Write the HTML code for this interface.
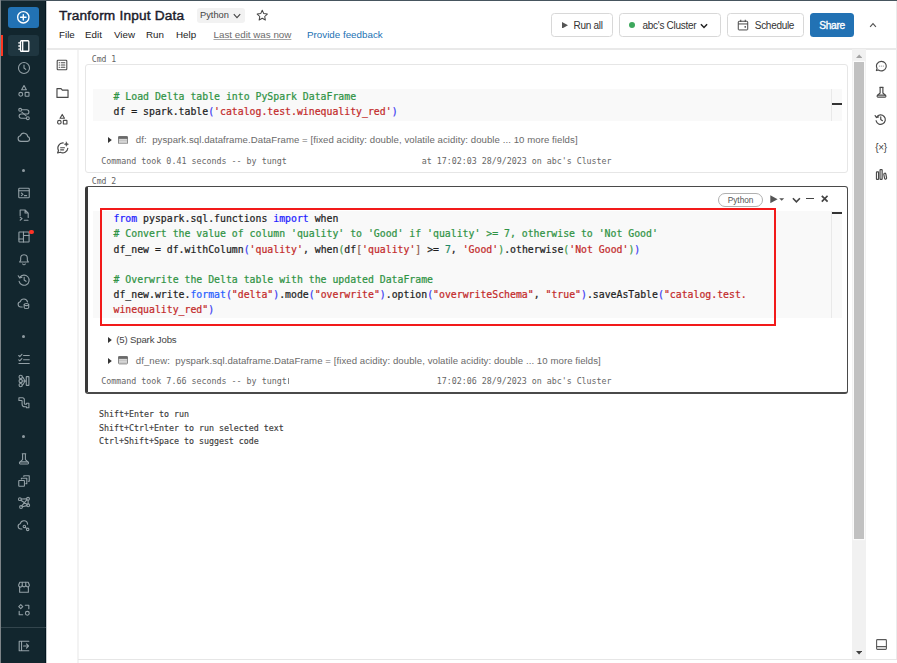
<!DOCTYPE html>
<html lang="en">
<head>
<meta charset="utf-8">
<title>Tranform Input Data - Databricks</title>
<style>
*{box-sizing:border-box;margin:0;padding:0}
html,body{width:897px;height:663px;overflow:hidden;background:#fff}
body{position:relative;font-family:"Liberation Sans",Arial,sans-serif;color:#222;font-size:11px}
.abs{position:absolute}
.mono{font-family:"DejaVu Sans Mono","Liberation Mono",monospace}
/* frame */
#topline{left:0;top:0;width:897px;height:1px;background:#46555e}
#leftline{left:0;top:0;width:1px;height:663px;background:#7d8488}
#rightline{left:896px;top:1px;width:1px;height:659px;background:#ebebeb}
#bottomline{left:78px;top:659px;width:819px;height:1px;background:#e6e6e6}
/* left nav */
#nav{left:1px;top:1px;width:45px;height:662px;background:#12262e;border-right:1px solid #04161f}
#navedge{left:46px;top:1px;width:1px;height:662px;background:#c3c9cc}
#newbtn{left:8px;top:7px;width:31px;height:21px;background:#2272b4;border-radius:3px}
#selitem{left:8px;top:35px;width:31px;height:21px;background:#1f3640;border-radius:3px}
#selbar{left:1px;top:35px;width:2px;height:21px;background:#ff3621}
.nico{position:absolute;left:16px;width:16px;height:16px;color:#93a0a6}
.nico svg{display:block;width:100%;height:100%;fill:none;stroke:currentColor;stroke-width:1.25;stroke-linecap:round;stroke-linejoin:round}
.ndot{position:absolute;left:22.200px;width:3px;height:3px;border-radius:50%;background:#8e9aa0}
#navdiv{left:1px;top:627px;width:45px;height:1px;background:#33454d}
/* header */
#title{left:59px;top:7.300px;font-size:13.700px;font-weight:normal;-webkit-text-stroke:0.450px #1c1c2b;letter-spacing:0.180px;color:#1c1c2b;white-space:nowrap;line-height:18px}
#langsel{left:197px;top:8.200px;width:47.5px;height:15px;background:#f2f2f2;border-radius:3px;font-size:9.3px;color:#444;line-height:15px;padding-left:3px;white-space:nowrap}
  .menu{position:absolute;top:27.600px;font-size:9.8px;line-height:13px;color:#222;white-space:nowrap}
#hdrline{left:47px;top:48px;width:850px;height:2px;background:#e9e9e9}
.hbtn{position:absolute;top:13px;height:24px;border:1px solid #d8d8d8;border-radius:3.5px;background:#fff;font-size:10px;letter-spacing:-0.300px;line-height:23px;color:#333;white-space:nowrap}
.hico{position:absolute}
.hico svg{display:block;width:100%;height:100%}
#share{left:810px;top:13px;width:44px;height:24px;background:#2272b4;border-radius:3.5px;color:#fff;font-size:10.200px;letter-spacing:-0.300px;line-height:25px;text-align:center;-webkit-text-stroke:0.350px #fff}
/* side panel */
#sideline{left:77px;top:50px;width:2px;height:613px;background:#f3f3f3}
.sico{position:absolute;left:55px;width:14px;height:14px;color:#4a4a4a}
.sico svg,.rico svg{display:block;width:100%;height:100%;fill:none;stroke:currentColor;stroke-width:1.45;stroke-linecap:round;stroke-linejoin:round}
.rico{position:absolute;left:874px;width:14px;height:14px;color:#4a4a4a}
/* scrollbar */
#track{left:852px;top:49px;width:14px;height:610px;background:#f1f1f1}
#thumb{left:853.600px;top:62px;width:10px;height:476.500px;background:#c1c1c1;box-shadow:0 0 0 1.200px #fbfbfb}
/* cells */
.cmdlbl{position:absolute;left:91.800px;font-size:8.150px;line-height:10px;color:#636363;white-space:nowrap}
#cell1{left:85px;top:63.500px;width:763px;height:109.500px;border:1px solid #e6e6e6;border-radius:3px;background:#fff}
#cell2{left:85px;top:186px;width:763px;height:208px;border:1px solid #4a4a4a;border-left:3px solid #3a3a3a;border-bottom:2px solid #4a4a4a;border-radius:3px;background:#fff}
.codebg{position:absolute;left:93px;width:749px;background:#f9f9f9}
.code{position:absolute;left:113.5px;font-size:9.830px;line-height:15.070px;white-space:pre;color:#1e1e1e;-webkit-text-stroke:0.220px currentColor}
.c{color:#2f9344}.s{color:#c32a2a}.k{color:#1c1cff}.p{color:#3c3cf2}.p2{color:#3f9a4a}.p3{color:#8a5a4a}.n{color:#1f8a66}.f{color:#2860ff}
.vline{position:absolute;left:831px;width:1px;background:#e9e9e9}
.vbar{position:absolute;left:832px;width:10px;height:2px;background:#333}
.res{position:absolute;font-size:9.600px;line-height:12px;color:#6a6a6a;white-space:nowrap;letter-spacing:0.070px}
.tri{position:absolute;width:3.800px;height:6px}
.tri svg{display:block;width:100%;height:100%}
.tbl{position:absolute;width:10px;height:8.400px}
.took{position:absolute;left:101.200px;font-size:8.340px;line-height:10px;color:#666;white-space:pre}
.tookr{left:auto;right:285.400px;font-size:8.300px}
#redbox{left:100px;top:208px;width:675.500px;height:118px;border:2px solid #f21a1a}
#pill{left:717.700px;top:193.300px;width:45.800px;height:13.600px;border:1px solid #b0b0b0;border-radius:7px;font-size:8.300px;line-height:12.800px;text-align:center;color:#555;background:#fff}
.hint{position:absolute;left:99px;font-size:8.300px;line-height:10px;color:#3c3c3c;-webkit-text-stroke:0.150px #3c3c3c;white-space:pre}
</style>
</head>
<body>
<!-- left nav -->
<div class="abs" id="nav"></div>
<div class="abs" id="navedge"></div>
<div class="abs" id="newbtn"></div>
<div class="abs" id="selitem"></div>
<div class="abs" id="selbar"></div>
<div class="abs" id="navdiv"></div>
<div class="nico" style="left:16.4px;top:9.7px;width:14.6px;height:14.6px;color:#ffffff;"><svg viewBox="0 0 16 16" style="stroke-width:1.5"><circle cx="8" cy="8" r="6.2"/><path d="M8 5v6M5 8h6"/></svg></div>
<div class="nico" style="left:16.7px;top:38.5px;width:14px;height:14px;color:#ffffff;"><svg viewBox="0 0 16 16" style="stroke-width:1.5"><rect x="4" y="2" width="9.5" height="12" rx="1" /><path d="M6.5 2v12M2 4.5h2M2 8h2M2 11.5h2"/></svg></div>
<div class="nico" style="left:16.7px;top:61.0px;width:14px;height:14px;"><svg viewBox="0 0 16 16" ><circle cx="8" cy="8" r="6.3"/><path d="M8 4.5V8l2 1.6"/></svg></div>
<div class="nico" style="left:16.7px;top:83.6px;width:14px;height:14px;"><svg viewBox="0 0 16 16" ><path d="M8 1.8l2.7 4.7H5.3z"/><circle cx="4.3" cy="11.8" r="2.2"/><rect x="9.3" y="9.6" width="4.4" height="4.4" rx=".5"/></svg></div>
<div class="nico" style="left:16.7px;top:106.7px;width:14px;height:14px;"><svg viewBox="0 0 16 16" ><circle cx="3.6" cy="3.2" r="1.6"/><circle cx="12.4" cy="12.8" r="1.6"/><path d="M5.2 3.2h6a2.4 2.4 0 0 1 0 4.8h-6.4a2.4 2.4 0 0 0 0 4.8h6"/><path d="M5.5 5.8l5 4.4" /></svg></div>
<div class="nico" style="left:16.7px;top:130.0px;width:14px;height:14px;"><svg viewBox="0 0 16 16" ><path d="M4.5 13a3.2 3.2 0 0 1-.6-6.35A4.3 4.3 0 0 1 12.3 7.6 2.75 2.75 0 0 1 12 13z"/></svg></div>
<div class="nico" style="left:16.7px;top:185.5px;width:14px;height:14px;"><svg viewBox="0 0 16 16" ><rect x="2" y="2.5" width="12" height="11" rx="1"/><path d="M2 5.5h12M5 8l1.8 1.5L5 11M8.5 11H11"/></svg></div>
<div class="nico" style="left:16.7px;top:208.2px;width:14px;height:14px;"><svg viewBox="0 0 16 16" ><path d="M3.6 8.6V2.2h5.6L12.8 5.8v5M9.2 2.2V5.800H12.8"/><path d="M3.600 10.400l2.200 1.800-2.200 1.800M8.300 14H12.600"/></svg></div>
<div class="nico" style="left:16.7px;top:229.6px;width:14px;height:14px;"><svg viewBox="0 0 16 16" ><rect x="2.2" y="2.2" width="11.6" height="11.6" rx=".6"/><path d="M7.400 2.200v11.600M2.200 10.200H7.400M7.400 6.200h6.400"/></svg></div>
<div class="nico" style="left:16.7px;top:252.0px;width:14px;height:14px;"><svg viewBox="0 0 16 16" ><path d="M3 11.5h10l-1.2-2V7a3.8 3.8 0 0 0-7.6 0v2.5z"/><path d="M6.5 13.6a1.6 1.6 0 0 0 3 0"/></svg></div>
<div class="nico" style="left:16.7px;top:273.3px;width:14px;height:14px;"><svg viewBox="0 0 16 16" ><path d="M3.2 5A5.8 5.8 0 1 1 2.4 9.5"/><path d="M1.4 3.2L3 5.6l2.6-.9"/><path d="M8.2 4.8V8l2.1 1.5"/></svg></div>
<div class="nico" style="left:16.7px;top:296.4px;width:14px;height:14px;"><svg viewBox="0 0 16 16" ><path d="M6 12.5H4.3a3 3 0 0 1-.5-5.96A4.2 4.2 0 0 1 12 6.8"/><ellipse cx="10.8" cy="9.8" rx="2.6" ry="1.2"/><path d="M8.2 9.8v3.2c0 .66 1.16 1.2 2.6 1.2s2.6-.54 2.6-1.2V9.8"/></svg></div>
<div class="nico" style="left:16.7px;top:352.2px;width:14px;height:14px;"><svg viewBox="0 0 16 16" ><path d="M2 4l1.2 1.2L5.6 2.6M2 9l1.2 1.2L5.6 7.6M7.5 4H14M7.5 8.8H14M2.2 13.2H14"/></svg></div>
<div class="nico" style="left:16.7px;top:373.7px;width:14px;height:14px;"><svg viewBox="0 0 16 16" ><circle cx="4.200" cy="3.300" r="1.900"/><circle cx="4.200" cy="8" r="1.900"/><circle cx="4.200" cy="12.700" r="1.900"/><path d="M6.100 3.600c2.200.200 1.600 4.400 3.900 4.400M6.100 12.400c2.200-.200 1.600-4.400 3.900-4.400M6.100 8h4"/><rect x="10.600" y="3" width="3" height="10" rx=".4"/></svg></div>
<div class="nico" style="left:16.7px;top:395.4px;width:14px;height:14px;"><svg viewBox="0 0 16 16" ><path d="M2.2 3.2h4.2a2 2 0 0 1 2 2v4.5a.8.8 0 0 0 .8.8h1.6v-1h2.8v5h-2.8v-1H9a3.2 3.2 0 0 1-3.2-3.2V6.8a.6.6 0 0 0-.6-.6H2.2z"/></svg></div>
<div class="nico" style="left:16.7px;top:451.8px;width:14px;height:14px;"><svg viewBox="0 0 16 16" ><path d="M6 2h4M6.4 2v6.6L3.2 11.6a1.2 1.2 0 0 0 .9 2.1h7.8a1.2 1.2 0 0 0 .9-2.1L9.6 8.6V2"/><path d="M3.6 11.3h8.8"/></svg></div>
<div class="nico" style="left:16.7px;top:473.8px;width:14px;height:14px;"><svg viewBox="0 0 16 16" ><rect x="2" y="7.5" width="6.5" height="6.5" rx=".5"/><path d="M5 5.8v-1h6.2v6.2h-1M7.8 2.8V2H14v6.2h-1"/></svg></div>
<div class="nico" style="left:16.7px;top:495.8px;width:14px;height:14px;"><svg viewBox="0 0 16 16" ><circle cx="3.3" cy="3.6" r="1.6"/><circle cx="12.6" cy="3.2" r="1.6"/><circle cx="12.8" cy="10.6" r="1.6"/><circle cx="4.6" cy="12.6" r="1.6"/><path d="M4.9 3.5l6.1-.2M4.4 4.9l7.2 4.8M12.7 4.8v4.2M11.3 11l-5.2 1.3M11.4 4.2L5.4 11.3"/></svg></div>
<div class="nico" style="left:16.7px;top:517.9px;width:14px;height:14px;"><svg viewBox="0 0 16 16" ><path d="M5.6 12.5H4.3a3 3 0 0 1-.5-5.96A4.2 4.2 0 0 1 12.1 7"/><circle cx="8.4" cy="9.6" r="1.4"/><circle cx="12.2" cy="13" r="1.4"/><path d="M9.4 10.6l1.8 1.5"/></svg></div>
<div class="nico" style="left:16.7px;top:580.4px;width:14px;height:14px;"><svg viewBox="0 0 16 16" ><path d="M3 7.5V14h10V7.5"/><path d="M3.2 2.5h9.6L14.2 6a2.06 2.06 0 0 1-4.1 0 2.06 2.06 0 0 1-4.1 0A2.06 2.06 0 0 1 1.8 6z"/><path d="M6 2.5V6M10 2.5V6" /></svg></div>
<div class="nico" style="left:16.7px;top:603.0px;width:14px;height:14px;"><svg viewBox="0 0 16 16" ><path d="M4.3 1.8l2.3 2.3-2.3 2.3L2 4.100z"/><circle cx="11.8" cy="11.8" r="2.2"/><path d="M9.5 2.5h4v4M6.500 13.5h-4v-4"/></svg></div>
<div class="nico" style="left:16.7px;top:638.7px;width:14px;height:14px;"><svg viewBox="0 0 16 16" ><path d="M13.500 2.500H2.500v11h11M5.200 2.500v11M7.500 8h5.500M10.800 5.600L13.200 8l-2.400 2.400"/></svg></div>
<div class="ndot" style="top:168.9px"></div>
<div class="ndot" style="top:335.3px"></div>
<div class="ndot" style="top:435.3px"></div>
<div class="abs" style="left:29.400px;top:229.600px;width:4.2px;height:4.2px;border-radius:50%;background:#ff3326"></div>

<!-- header -->
<div class="abs" id="title">Tranform Input Data</div>
<div class="abs" id="langsel">Python</div>
<div class="hico" style="left:233px;top:12.200px;width:8px;height:8px"><svg viewBox="0 0 8 8"><path d="M0.800 2.200L4 5.600 7.200 2.200" fill="none" stroke="#444" stroke-width="1.100"/></svg></div>
<div class="hico" style="left:256.200px;top:9px;width:12.500px;height:12.500px"><svg viewBox="0 0 16 16"><path d="M8 1.700l1.950 4.200 4.550.550-3.350 3.150.850 4.550L8 11.900l-4 2.250.850-4.550L1.500 6.450l4.550-.550z" fill="none" stroke="#444" stroke-width="1.300" stroke-linejoin="round"/></svg></div>
<div class="menu" style="left:59px">File</div>
<div class="menu" style="left:85px">Edit</div>
<div class="menu" style="left:114px">View</div>
<div class="menu" style="left:146px">Run</div>
<div class="menu" style="left:176px">Help</div>
<div class="menu" style="left:213.500px;color:#6b6b6b;text-decoration:underline;text-decoration-color:#a5a5a5">Last edit was now</div>
<div class="menu" style="left:307px;color:#2272b4">Provide feedback</div>
<div class="hbtn" style="left:551px;width:62px;padding-left:21.600px">Run all</div>
<div class="hico" style="left:562px;top:21.800px;width:6px;height:6.600px"><svg viewBox="0 0 6 6.600"><path d="M0 0L6 3.300 0 6.600z" fill="#555"/></svg></div>
<div class="hbtn" style="left:619px;width:101.500px;padding-left:22.600px">abc's Cluster</div>
<div class="abs" style="left:628.800px;top:21.700px;width:6.600px;height:6.600px;border-radius:50%;background:#3ea85d"></div>
<div class="hico" style="left:700.400px;top:21.500px;width:8px;height:8px"><svg viewBox="0 0 8 8"><path d="M0.900 2.200L4 5.400 7.100 2.200" fill="none" stroke="#222" stroke-width="1.500"/></svg></div>
<div class="hbtn" style="left:727px;width:77px;padding-left:26.800px">Schedule</div>
<div class="hico" style="left:736.600px;top:18.800px;width:12px;height:12px"><svg viewBox="0 0 16 16" fill="none" stroke="#444" stroke-width="1.300" stroke-linejoin="round"><rect x="1.700" y="3" width="12.600" height="11.600" rx="1"/><path d="M1.700 6.600h12.600M5 1v3M11 1v3"/><path d="M10 10.500h2M11 9.500v2" stroke-width="1.200"/></svg></div>
<div class="abs" id="share">Share</div>
<div class="hico" style="left:868.700px;top:21.400px;width:8px;height:8px"><svg viewBox="0 0 8 8"><path d="M1.100 5.800L4 2.700 6.900 5.800" fill="none" stroke="#555" stroke-width="1.200"/></svg></div>
<div class="abs" id="hdrline"></div>

<!-- side panel -->
<div class="abs" id="sideline"></div>

<!-- side panel icons -->
<div class="sico" style="left:56.400px;top:59.300px;width:12px;height:12px"><svg viewBox="0 0 16 16"><rect x="1.600" y="1.600" width="12.800" height="12.800" rx="1"/><path d="M4.200 5h.6M4.200 8h.6M4.200 11h.6M7 5h4.800M7 8h4.800M7 11h4.800" /></svg></div>
<div class="sico" style="left:55.800px;top:86.200px;width:13px;height:13px"><svg viewBox="0 0 16 16"><path d="M1.200 3.200h5l1.600 1.900h7v8.900H1.200z"/></svg></div>
<div class="sico" style="left:56.200px;top:113.300px;width:12.500px;height:12.500px"><svg viewBox="0 0 16 16"><path d="M8 1.800l2.800 4.900H5.200z"/><circle cx="4.300" cy="11.800" r="2.300"/><rect x="9.400" y="9.500" width="4.600" height="4.600" rx=".5"/></svg></div>
<div class="sico" style="left:55.600px;top:140.800px;width:13.500px;height:13.500px"><svg viewBox="0 0 16 16"><path d="M8.500 2.300A6 6 0 0 0 3 11.200L1.900 14.200l3.300-.9A6 6 0 0 0 14 8.600"/><path d="M5.500 8h4.500M5.500 10.500h3.500"/><path d="M12.300 1.300l.7 1.800 1.800.7-1.800.7-.7 1.800-.7-1.800-1.800-.7 1.800-.7z" fill="currentColor" stroke-width=".6"/></svg></div>

<!-- scrollbar -->
<div class="abs" id="track"></div>
<div class="abs" id="thumb"></div>

<!-- right panel icons -->
<div class="rico" style="left:874.800px;top:59.500px;width:12.500px;height:12.500px"><svg viewBox="0 0 16 16"><path d="M8.200 1.700a6.100 6.100 0 1 1-3.600 11L1.800 13.500l.9-2.700A6.100 6.100 0 0 1 8.200 1.700z"/><path d="M5.500 7.800h.4M8 7.800h.4M10.500 7.800h.4" stroke="#aaa"/></svg></div>
<div class="rico" style="left:874.500px;top:86px;width:13px;height:13px"><svg viewBox="0 0 16 16"><path d="M6 1.800h4M6.300 1.800v6.800L3 11.700a1.200 1.200 0 0 0 .9 2.100h8.200a1.200 1.200 0 0 0 .9-2.100L9.700 8.600V1.800"/><path d="M3.400 11.300h9.200"/></svg></div>
<div class="rico" style="left:874.300px;top:113.300px;width:13px;height:13px"><svg viewBox="0 0 16 16"><path d="M3.300 5A5.800 5.800 0 1 1 2.500 9.500"/><path d="M1.400 3.200L3.100 5.600l2.600-.9"/><path d="M8.300 4.800V8l2.100 1.500"/></svg></div>
<div class="rico" style="left:873px;top:140px;width:16px;height:15px"><svg viewBox="0 0 16 15" style="stroke:none"><text x="8" y="11" text-anchor="middle" font-family="Liberation Sans, sans-serif" font-size="10" fill="#444" stroke="none" letter-spacing="-0.3">{×}</text></svg></div>
<div class="rico" style="left:874.500px;top:168px;width:13px;height:13px"><svg viewBox="0 0 16 16"><rect x="1.800" y="4.800" width="2.600" height="9.200" rx=".6"/><rect x="6.200" y="2" width="2.600" height="12" rx=".6"/><path d="M10.800 7.600a1.300 1.300 0 0 1 2.500-.4l1 5.200a1.300 1.300 0 0 1-2.500.5z"/></svg></div>
<div class="rico" style="left:875.500px;top:639px;width:11px;height:11px;color:#5a5a5a"><svg viewBox="0 0 11 11" style="stroke-width:1.100"><rect x=".6" y=".6" width="9.800" height="9.800" rx=".8"/><path d="M.6 7.600h9.800" /></svg></div>
<!-- scrollbar arrows -->
<div class="hico" style="left:855.500px;top:54px;width:6.400px;height:4px"><svg viewBox="0 0 6.400 4"><path d="M0 4L3.200 0.400 6.400 4z" fill="#a3a3a3"/></svg></div>
<div class="hico" style="left:855.600px;top:651px;width:6.200px;height:3.600px"><svg viewBox="0 0 6.200 3.600"><path d="M0 0L3.100 3.600 6.200 0z" fill="#404040"/></svg></div>

<!-- cell 1 -->
<div class="cmdlbl mono" style="top:53.600px">Cmd 1</div>
<div class="abs" id="cell1"></div>
<div class="codebg" style="top:89px;height:31.500px"></div>
<div class="vline" style="top:89px;height:31.500px"></div>
<div class="vbar" style="top:103px"></div>
<div class="code mono" style="top:88.600px"><span class="c"># Load Delta table into PySpark DataFrame</span>
df = spark.table<span class="p">(</span><span class="s">'catalog.test.winequality_red'</span><span class="p">)</span></div>
<div class="tri" style="left:108.300px;top:137px"><svg viewBox="0 0 3.800 6"><path d="M0 0L3.800 3 0 6z" fill="#333"/></svg></div>
<div class="tbl" style="left:118px;top:135.500px"><svg viewBox="0 0 10 8.400" style="display:block;width:100%;height:100%"><rect x=".5" y=".5" width="9" height="7.400" rx=".8" fill="#e4e4e4" stroke="#8a8a8a"/><rect x=".5" y=".5" width="9" height="2.200" rx=".6" fill="#6a6a6a" stroke="#6a6a6a" stroke-width=".6"/><path d="M1 4.600h8M1 6.200h8" stroke="#b5b5b5" stroke-width=".7"/></svg></div>
<div class="res" style="left:135.800px;top:134.200px">df:&nbsp; pyspark.sql.dataframe.DataFrame = [fixed acidity: double, volatile acidity: double ... 10 more fields]</div>
<div class="took mono" style="top:155.700px">Command took 0.41 seconds -- by tungt</div>
<div class="took tookr mono" style="top:155.700px">at 17:02:03 28/9/2023 on abc's Cluster</div>

<!-- cell 2 -->
<div class="cmdlbl mono" style="top:176px">Cmd 2</div>
<div class="abs" id="cell2"></div>
<div class="codebg" style="top:211px;height:106.600px"></div>
<div class="vline" style="top:211px;height:106.600px"></div>
<div class="vbar" style="top:211.600px"></div>
<div class="abs" id="pill">Python</div>
<div class="hico" style="left:770px;top:194.800px;width:15px;height:8.400px"><svg viewBox="0 0 15 8.400"><path d="M0.300 0.200L7.600 4.200 0.300 8.200z" fill="#555"/><path d="M9.200 3.200h5L11.700 5.800z" fill="#555"/></svg></div>
<div class="hico" style="left:791.800px;top:195.500px;width:8.800px;height:8px"><svg viewBox="0 0 8.800 8"><path d="M0.900 2.300L4.400 5.900 7.900 2.300" fill="none" stroke="#444" stroke-width="1.600"/></svg></div>
<div class="abs" style="left:806.400px;top:197.700px;width:7.600px;height:1.800px;background:#444"></div>
<div class="hico" style="left:820.800px;top:195.400px;width:7.400px;height:7.400px"><svg viewBox="0 0 7.400 7.400"><path d="M0.800 0.800L6.600 6.600M6.600 0.800L0.800 6.600" fill="none" stroke="#444" stroke-width="1.700"/></svg></div>
<div class="code mono" style="top:211.400px"><span class="k">from</span> pyspark.sql.functions <span class="k">import</span> when
<span class="c"># Convert the value of column 'quality' to 'Good' if 'quality' &gt;= 7, otherwise to 'Not Good'</span>
df_new = df.withColumn<span class="p">(</span><span class="s">'quality'</span>, when<span class="p2">(</span>df<span class="p3">[</span><span class="s">'quality'</span><span class="p3">]</span> &gt;= <span class="n">7</span>, <span class="s">'Good'</span><span class="p2">)</span>.otherwise<span class="p2">(</span><span class="s">'Not Good'</span><span class="p2">)</span><span class="p">)</span>

<span class="c"># Overwrite the Delta table with the updated DataFrame</span>
df_new.write.<span class="f">format</span><span class="p">(</span><span class="s">"delta"</span><span class="p">)</span>.mode<span class="p">(</span><span class="s">"overwrite"</span><span class="p">)</span>.option<span class="p">(</span><span class="s">"overwriteSchema"</span>, <span class="s">"true"</span><span class="p">)</span>.saveAsTable<span class="p">(</span><span class="s">"catalog.test.</span>
<span class="s">winequality_red"</span><span class="p">)</span></div>
<div class="abs" id="redbox"></div>
<div class="tri" style="left:108.300px;top:336.800px"><svg viewBox="0 0 3.800 6"><path d="M0 0L3.800 3 0 6z" fill="#333"/></svg></div>
<div class="res" style="left:116.200px;top:333.600px;color:#444;letter-spacing:-0.150px">(5) Spark Jobs</div>
<div class="tri" style="left:108.300px;top:357.800px"><svg viewBox="0 0 3.800 6"><path d="M0 0L3.800 3 0 6z" fill="#333"/></svg></div>
<div class="tbl" style="left:118px;top:356.200px"><svg viewBox="0 0 10 8.400" style="display:block;width:100%;height:100%"><rect x=".5" y=".5" width="9" height="7.400" rx=".8" fill="#e4e4e4" stroke="#8a8a8a"/><rect x=".5" y=".5" width="9" height="2.200" rx=".6" fill="#6a6a6a" stroke="#6a6a6a" stroke-width=".6"/><path d="M1 4.600h8M1 6.200h8" stroke="#b5b5b5" stroke-width=".7"/></svg></div>
<div class="res" style="left:135.800px;top:354.800px">df_new:&nbsp; pyspark.sql.dataframe.DataFrame = [fixed acidity: double, volatile acidity: double ... 10 more fields]</div>
<div class="took mono" style="top:376.200px">Command took 7.66 seconds -- by tungt</div>
<div class="took tookr mono" style="top:376.200px">17:02:06 28/9/2023 on abc's Cluster</div>

<div class="abs" style="left:287.800px;top:377.800px;width:1px;height:6.200px;background:#8a8a8a"></div>
<!-- hints -->
<div class="hint mono" style="top:408.800px">Shift+Enter to run</div>
<div class="hint mono" style="top:422.600px">Shift+Ctrl+Enter to run selected text</div>
<div class="hint mono" style="top:436.300px">Ctrl+Shift+Space to suggest code</div>

<!-- frame lines -->
<div class="abs" id="topline"></div>
<div class="abs" id="leftline"></div>
<div class="abs" id="rightline"></div>
<div class="abs" id="bottomline"></div>
</body>
</html>
